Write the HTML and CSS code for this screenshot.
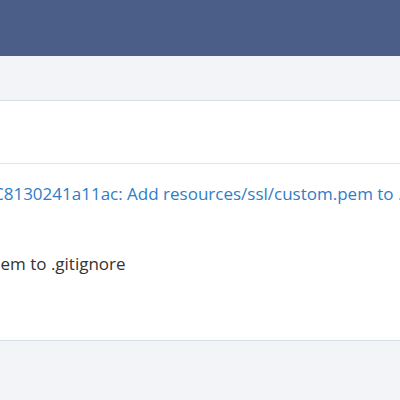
FILE: index.html
```html
<!DOCTYPE html>
<html lang="en">
<head>
    <meta charset="UTF-8">
    <meta name="viewport" content="width=device-width, initial-scale=1.0">
    <title>Commit</title>
    <link rel="stylesheet" href="styles.css">
</head>
<body>

    <div class="header"></div>
    <div class="toolbar"></div>

    <div class="panel">
        <div class="panel-head"></div>
        <div class="panel-body">
            <a class="commit-link" href="#">C8130241a11ac: Add resources/ssl/custom.pem to .gitignore</a>
            <p class="commit-msg">Add resources/ssl/custom.pem to .gitignore</p>
        </div>
    </div>

    <div class="footer"></div>

</body>
</html>
```

FILE: styles.css
```css
* {
    margin: 0;
    padding: 0;
    box-sizing: border-box;
}
html, body {
    height: 100%;
}
body {
    font-family: 'Open Sans', 'Noto Sans', sans-serif;
    background-color: #f3f4f7;
    color: #333;
    overflow: hidden;
}
.header {
    height: 56px;
    background-color: #4a5e87;
}
.toolbar {
    height: 45px;
    background-color: #f3f4f7;
    border-bottom: 1px solid #d3dee6;
}
.panel {
    background-color: #fff;
    border-bottom: 1px solid #d3dee6;
}
.panel-head {
    height: 63px;
    border-bottom: 1px solid #dde5ee;
}
.panel-body {
    padding: 19px 0 65px;
    margin-left: -7px;
    white-space: nowrap;
    font-size: 17px;
}
.commit-link {
    display: block;
    color: #2f7dc6;
    text-decoration: none;
    line-height: 22px;
}
.commit-msg {
    margin-top: 48px;
    margin-left: -213px;
    line-height: 22px;
}
```
